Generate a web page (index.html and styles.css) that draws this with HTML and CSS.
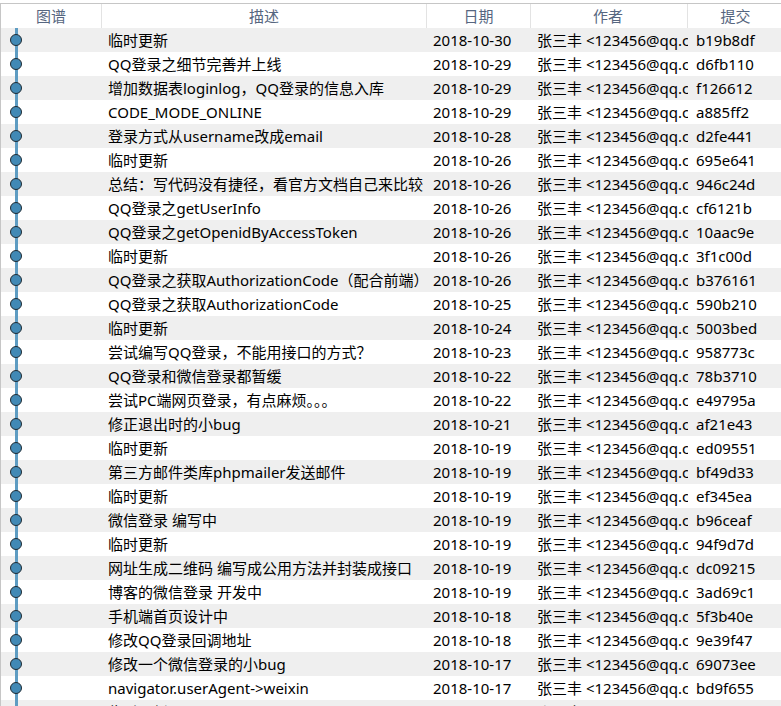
FILE: index.html
```html
<!DOCTYPE html>
<html lang="zh-CN">
<head>
    <meta charset="UTF-8">
    <title>提交历史</title>
    <link rel="stylesheet" href="styles.css">
</head>
<body>
    <div class="log">
        <div class="row head">
            <div class="cell">图谱</div>
            <div class="cell">描述</div>
            <div class="cell">日期</div>
            <div class="cell">作者</div>
            <div class="cell">提交</div>
        </div>
        <div class="row"><div class="graph"></div><div class="cell">临时更新</div><div class="cell">2018-10-30</div><div class="cell">张三丰 &lt;123456@qq.com&gt;</div><div class="cell">b19b8df</div></div>
        <div class="row"><div class="graph"></div><div class="cell">QQ登录之细节完善并上线</div><div class="cell">2018-10-29</div><div class="cell">张三丰 &lt;123456@qq.com&gt;</div><div class="cell">d6fb110</div></div>
        <div class="row"><div class="graph"></div><div class="cell">增加数据表loginlog，QQ登录的信息入库</div><div class="cell">2018-10-29</div><div class="cell">张三丰 &lt;123456@qq.com&gt;</div><div class="cell">f126612</div></div>
        <div class="row"><div class="graph"></div><div class="cell">CODE_MODE_ONLINE</div><div class="cell">2018-10-29</div><div class="cell">张三丰 &lt;123456@qq.com&gt;</div><div class="cell">a885ff2</div></div>
        <div class="row"><div class="graph"></div><div class="cell">登录方式从username改成email</div><div class="cell">2018-10-28</div><div class="cell">张三丰 &lt;123456@qq.com&gt;</div><div class="cell">d2fe441</div></div>
        <div class="row"><div class="graph"></div><div class="cell">临时更新</div><div class="cell">2018-10-26</div><div class="cell">张三丰 &lt;123456@qq.com&gt;</div><div class="cell">695e641</div></div>
        <div class="row"><div class="graph"></div><div class="cell">总结：写代码没有捷径，看官方文档自己来比较</div><div class="cell">2018-10-26</div><div class="cell">张三丰 &lt;123456@qq.com&gt;</div><div class="cell">946c24d</div></div>
        <div class="row"><div class="graph"></div><div class="cell">QQ登录之getUserInfo</div><div class="cell">2018-10-26</div><div class="cell">张三丰 &lt;123456@qq.com&gt;</div><div class="cell">cf6121b</div></div>
        <div class="row"><div class="graph"></div><div class="cell">QQ登录之getOpenidByAccessToken</div><div class="cell">2018-10-26</div><div class="cell">张三丰 &lt;123456@qq.com&gt;</div><div class="cell">10aac9e</div></div>
        <div class="row"><div class="graph"></div><div class="cell">临时更新</div><div class="cell">2018-10-26</div><div class="cell">张三丰 &lt;123456@qq.com&gt;</div><div class="cell">3f1c00d</div></div>
        <div class="row"><div class="graph"></div><div class="cell">QQ登录之获取AuthorizationCode（配合前端）</div><div class="cell">2018-10-26</div><div class="cell">张三丰 &lt;123456@qq.com&gt;</div><div class="cell">b376161</div></div>
        <div class="row"><div class="graph"></div><div class="cell">QQ登录之获取AuthorizationCode</div><div class="cell">2018-10-25</div><div class="cell">张三丰 &lt;123456@qq.com&gt;</div><div class="cell">590b210</div></div>
        <div class="row"><div class="graph"></div><div class="cell">临时更新</div><div class="cell">2018-10-24</div><div class="cell">张三丰 &lt;123456@qq.com&gt;</div><div class="cell">5003bed</div></div>
        <div class="row"><div class="graph"></div><div class="cell">尝试编写QQ登录，不能用接口的方式？</div><div class="cell">2018-10-23</div><div class="cell">张三丰 &lt;123456@qq.com&gt;</div><div class="cell">958773c</div></div>
        <div class="row"><div class="graph"></div><div class="cell">QQ登录和微信登录都暂缓</div><div class="cell">2018-10-22</div><div class="cell">张三丰 &lt;123456@qq.com&gt;</div><div class="cell">78b3710</div></div>
        <div class="row"><div class="graph"></div><div class="cell">尝试PC端网页登录，有点麻烦。。。</div><div class="cell">2018-10-22</div><div class="cell">张三丰 &lt;123456@qq.com&gt;</div><div class="cell">e49795a</div></div>
        <div class="row"><div class="graph"></div><div class="cell">修正退出时的小bug</div><div class="cell">2018-10-21</div><div class="cell">张三丰 &lt;123456@qq.com&gt;</div><div class="cell">af21e43</div></div>
        <div class="row"><div class="graph"></div><div class="cell">临时更新</div><div class="cell">2018-10-19</div><div class="cell">张三丰 &lt;123456@qq.com&gt;</div><div class="cell">ed09551</div></div>
        <div class="row"><div class="graph"></div><div class="cell">第三方邮件类库phpmailer发送邮件</div><div class="cell">2018-10-19</div><div class="cell">张三丰 &lt;123456@qq.com&gt;</div><div class="cell">bf49d33</div></div>
        <div class="row"><div class="graph"></div><div class="cell">临时更新</div><div class="cell">2018-10-19</div><div class="cell">张三丰 &lt;123456@qq.com&gt;</div><div class="cell">ef345ea</div></div>
        <div class="row"><div class="graph"></div><div class="cell">微信登录 编写中</div><div class="cell">2018-10-19</div><div class="cell">张三丰 &lt;123456@qq.com&gt;</div><div class="cell">b96ceaf</div></div>
        <div class="row"><div class="graph"></div><div class="cell">临时更新</div><div class="cell">2018-10-19</div><div class="cell">张三丰 &lt;123456@qq.com&gt;</div><div class="cell">94f9d7d</div></div>
        <div class="row"><div class="graph"></div><div class="cell">网址生成二维码 编写成公用方法并封装成接口</div><div class="cell">2018-10-19</div><div class="cell">张三丰 &lt;123456@qq.com&gt;</div><div class="cell">dc09215</div></div>
        <div class="row"><div class="graph"></div><div class="cell">博客的微信登录 开发中</div><div class="cell">2018-10-19</div><div class="cell">张三丰 &lt;123456@qq.com&gt;</div><div class="cell">3ad69c1</div></div>
        <div class="row"><div class="graph"></div><div class="cell">手机端首页设计中</div><div class="cell">2018-10-18</div><div class="cell">张三丰 &lt;123456@qq.com&gt;</div><div class="cell">5f3b40e</div></div>
        <div class="row"><div class="graph"></div><div class="cell">修改QQ登录回调地址</div><div class="cell">2018-10-18</div><div class="cell">张三丰 &lt;123456@qq.com&gt;</div><div class="cell">9e39f47</div></div>
        <div class="row"><div class="graph"></div><div class="cell">修改一个微信登录的小bug</div><div class="cell">2018-10-17</div><div class="cell">张三丰 &lt;123456@qq.com&gt;</div><div class="cell">69073ee</div></div>
        <div class="row"><div class="graph"></div><div class="cell">navigator.userAgent-&gt;weixin</div><div class="cell">2018-10-17</div><div class="cell">张三丰 &lt;123456@qq.com&gt;</div><div class="cell">bd9f655</div></div>
        <div class="row"><div class="graph"></div><div class="cell">临时更新</div><div class="cell">2018-10-16</div><div class="cell">张三丰 &lt;123456@qq.com&gt;</div><div class="cell">0c1d2e3</div></div>
    </div>
</body>
</html>
```

FILE: styles.css
```css
html, body {
    margin: 0;
    padding: 0;
    height: 100%;
    overflow: hidden;
    background: #fff;
}
body {
    padding-top: 3px;
    box-sizing: border-box;
    font-family: "Noto Sans", "Noto Sans CJK SC", sans-serif;
    font-size: 15px;
    color: #000;
}
.log {
    border-top: 1px solid #c6c6c6;
    border-left: 1px solid #c6c6c6;
    height: 100%;
}
.row {
    display: grid;
    grid-template-columns: 101px 325px 104px 157px 1fr;
    height: 24px;
    line-height: 24px;
}
.row:nth-child(even) {
    background: #efefef;
}
.cell {
    padding: 0 6px;
    white-space: nowrap;
    overflow: hidden;
}
.head .cell {
    text-align: center;
    color: #566680;
    border-right: 1px solid #e3e3e3;
}
.head .cell:last-child {
    border-right: none;
}
.row .cell:nth-child(4) {
    padding-right: 8px;
}
.row .cell:last-child {
    padding-left: 8px;
}
.graph {
    position: relative;
}
.graph::before {
    content: '';
    position: absolute;
    left: 14px;
    top: 0;
    bottom: 0;
    width: 3px;
    background: #5e9cc2;
}
.graph::after {
    content: '';
    position: absolute;
    left: 9px;
    top: 6px;
    width: 10px;
    height: 10px;
    border: 1.5px solid #1f2b33;
    border-radius: 50%;
    background: #4189b5;
}
```
